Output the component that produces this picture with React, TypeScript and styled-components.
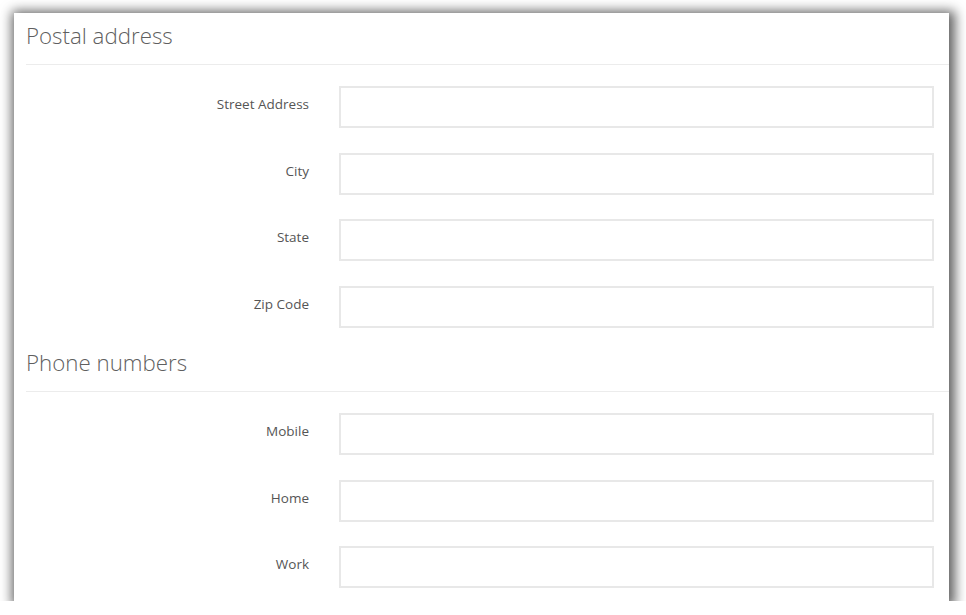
import React from "react";
import styled, { createGlobalStyle } from "styled-components";

const GlobalStyle = createGlobalStyle`
  html, body {
    margin: 0;
    padding: 0;
    background: #fff;
  }
  body {
    font-family: "Open Sans", "Liberation Sans", Arial, sans-serif;
    overflow: hidden;
  }
`;

const Page = styled.div`
  padding: 13px 0 0 14px;
`;

const Panel = styled.div`
  width: 935px;
  height: 588px;
  background: #fff;
  box-shadow: 2px 2px 11px 4px rgba(0, 0, 0, 0.62);
  overflow: hidden;
  padding-left: 12px;
  box-sizing: border-box;
`;

const Section = styled.section<{ $first?: boolean }>`
  margin-top: ${(p) => (p.$first ? "0" : "12.5px")};
`;

const Heading = styled.h3`
  margin: 0;
  padding: 8px 0 13px;
  line-height: 30px;
  font-size: 22.3px;
  font-weight: 300;
  color: #5f5f5f;
  border-bottom: 1px solid #ececec;
`;

const Rows = styled.div`
  display: flex;
  flex-direction: column;
  gap: 24.5px;
  margin-top: 21px;
  padding-right: 15px;
`;

const Row = styled.div`
  display: flex;
  align-items: flex-start;
  gap: 30px;
`;

const Label = styled.label`
  width: 283px;
  flex: none;
  text-align: right;
  padding-top: 8px;
  font-size: 13.5px;
  line-height: 20px;
  color: #555;
`;

const Input = styled.input`
  flex: 1;
  height: 42px;
  box-sizing: border-box;
  border: 2px solid #e8e8e8;
  border-radius: 0;
  outline: none;
  padding: 0 10px;
  font-family: inherit;
  font-size: 13px;
  background: #fff;
`;

const sections = [
  { title: "Postal address", fields: ["Street Address", "City", "State", "Zip Code"] },
  { title: "Phone numbers", fields: ["Mobile", "Home", "Work"] },
];

export default function App() {
  return (
    <>
      <GlobalStyle />
      <Page>
        <Panel>
          {sections.map((s, i) => (
            <Section key={s.title} $first={i === 0}>
              <Heading>{s.title}</Heading>
              <Rows>
                {s.fields.map((f) => (
                  <Row key={f}>
                    <Label>{f}</Label>
                    <Input type="text" />
                  </Row>
                ))}
              </Rows>
            </Section>
          ))}
        </Panel>
      </Page>
    </>
  );
}
